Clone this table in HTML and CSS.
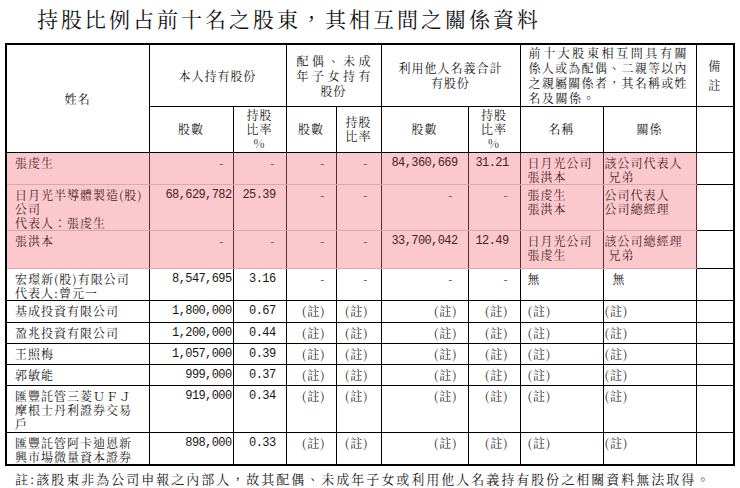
FILE: index.html
```html
<!DOCTYPE html>
<html lang="zh-Hant">
<head>
<meta charset="utf-8">
<title>持股比例占前十名之股東</title>
<link rel="stylesheet" href="styles.css">
</head>
<body>
<div class="page">
  <h1 class="title">持股比例占前十名之股東，其相互間之關係資料</h1>
  <table class="grid">
    <colgroup>
      <col class="w-name"><col class="w-n1"><col class="w-p1"><col class="w-n2"><col class="w-p2"><col class="w-n3"><col class="w-p3"><col class="w-rn"><col class="w-rl"><col class="w-bz">
    </colgroup>
    <thead>
      <tr class="hr1">
        <th rowspan="2">姓名</th>
        <th colspan="2">本人持有股份</th>
        <th colspan="2"><div class="jbox w72"><span class="jl">配偶、未成</span><span class="jl">年子女持有</span></div><span class="cl">股份</span></th>
        <th colspan="2">利用他人名義合計<br>有股份</th>
        <th colspan="2" class="lead"><span class="jl">前十大股東相互間具有關</span><span class="jl">係人或為配偶、二親等以內</span><span class="jl">之親屬關係者，其名稱或姓</span><span class="last">名及關係。</span></th>
        <th class="bz-h">備<br>註</th>
      </tr>
      <tr class="hr2">
        <th>股數</th>
        <th>持股<br>比率<br>%</th>
        <th>股數</th>
        <th>持股<br>比率</th>
        <th>股數</th>
        <th>持股<br>比率<br>%</th>
        <th>名稱</th>
        <th>關係</th>
        <th></th>
      </tr>
    </thead>
    <tbody>
      <tr class="hl hl-first r31">
        <td class="nm">張虔生</td>
        <td class="n1 dash">-</td>
        <td class="p1">-</td>
        <td class="n2">-</td>
        <td class="p2">-</td>
        <td class="n3 num">84,360,669</td>
        <td class="p3 num">31.21</td>
        <td class="rn">日月光公司<br>張洪本</td>
        <td class="rl">該公司代表人<br>&nbsp;兄弟</td>
        <td class="bz"></td>
      </tr>
      <tr class="hl r46">
        <td class="nm">日月光半導體製造(股)<br>公司<br>代表人：張虔生</td>
        <td class="n1 num">68,629,782</td>
        <td class="p1 num">25.39</td>
        <td class="n2">-</td>
        <td class="p2">-</td>
        <td class="n3 dash3">-</td>
        <td class="p3">-</td>
        <td class="rn">張虔生<br>張洪本</td>
        <td class="rl">公司代表人<br>公司總經理</td>
        <td class="bz"></td>
      </tr>
      <tr class="hl r38">
        <td class="nm">張洪本</td>
        <td class="n1 dash">-</td>
        <td class="p1">-</td>
        <td class="n2">-</td>
        <td class="p2">-</td>
        <td class="n3 num">33,700,042</td>
        <td class="p3 num">12.49</td>
        <td class="rn">日月光公司<br>張虔生</td>
        <td class="rl">該公司總經理<br>&nbsp;兄弟</td>
        <td class="bz"></td>
      </tr>
      <tr class="r32">
        <td class="nm">宏璟新(股)有限公司<br>代表人:曾元一</td>
        <td class="n1 num">8,547,695</td>
        <td class="p1 num">3.16</td>
        <td class="n2">-</td>
        <td class="p2">-</td>
        <td class="n3 dash3">-</td>
        <td class="p3">-</td>
        <td class="rn">無</td>
        <td class="rl wu">無</td>
        <td class="bz"></td>
      </tr>
      <tr class="r22">
        <td class="nm">基成投資有限公司</td>
        <td class="n1 num">1,800,000</td>
        <td class="p1 num">0.67</td>
        <td class="n2">(註)</td>
        <td class="p2">(註)</td>
        <td class="n3">(註)</td>
        <td class="p3">(註)</td>
        <td class="rn">(註)</td>
        <td class="rl">(註)</td>
        <td class="bz"></td>
      </tr>
      <tr class="r21">
        <td class="nm">盈兆投資有限公司</td>
        <td class="n1 num">1,200,000</td>
        <td class="p1 num">0.44</td>
        <td class="n2">(註)</td>
        <td class="p2">(註)</td>
        <td class="n3">(註)</td>
        <td class="p3">(註)</td>
        <td class="rn">(註)</td>
        <td class="rl">(註)</td>
        <td class="bz"></td>
      </tr>
      <tr class="r21">
        <td class="nm">王照梅</td>
        <td class="n1 num">1,057,000</td>
        <td class="p1 num">0.39</td>
        <td class="n2">(註)</td>
        <td class="p2">(註)</td>
        <td class="n3">(註)</td>
        <td class="p3">(註)</td>
        <td class="rn">(註)</td>
        <td class="rl">(註)</td>
        <td class="bz"></td>
      </tr>
      <tr class="r21">
        <td class="nm">郭敏能</td>
        <td class="n1 num">999,000</td>
        <td class="p1 num">0.37</td>
        <td class="n2">(註)</td>
        <td class="p2">(註)</td>
        <td class="n3">(註)</td>
        <td class="p3">(註)</td>
        <td class="rn">(註)</td>
        <td class="rl">(註)</td>
        <td class="bz"></td>
      </tr>
      <tr class="r47">
        <td class="nm">匯豐託管三菱ＵＦＪ<br>摩根士丹利證券交易<br>戶</td>
        <td class="n1 num">919,000</td>
        <td class="p1 num">0.34</td>
        <td class="n2">(註)</td>
        <td class="p2">(註)</td>
        <td class="n3">(註)</td>
        <td class="p3">(註)</td>
        <td class="rn">(註)</td>
        <td class="rl">(註)</td>
        <td class="bz"></td>
      </tr>
      <tr class="r32">
        <td class="nm">匯豐託管阿卡迪恩新<br>興市場微量資本證券</td>
        <td class="n1 num">898,000</td>
        <td class="p1 num">0.33</td>
        <td class="n2">(註)</td>
        <td class="p2">(註)</td>
        <td class="n3">(註)</td>
        <td class="p3">(註)</td>
        <td class="rn">(註)</td>
        <td class="rl">(註)</td>
        <td class="bz"></td>
      </tr>
    </tbody>
  </table>
  <p class="note">註:該股東非為公司申報之內部人，故其配偶、未成年子女或利用他人名義持有股份之相關資料無法取得。</p>
</div>
</body>
</html>
```

FILE: styles.css
```css
html, body {
  margin: 0;
  padding: 0;
  background: #ffffff;
}

body {
  color: #161616;
  font-family: "Noto Serif CJK TC", "AR PL UMing TW", "Noto Sans CJK TC", serif;
}

.page {
  padding: 5px;
}

.title {
  margin: 0 0 12px 32px;
  font-size: 21px;
  line-height: 26px;
  letter-spacing: 3px;
  font-weight: normal;
  color: #111;
}

.grid {
  border-collapse: collapse;
  table-layout: fixed;
  width: 728px;
  border: 2px solid #000;
}

.w-name { width: 143px; }
.w-n1 { width: 84px; }
.w-p1 { width: 53px; }
.w-n2 { width: 50px; }
.w-p2 { width: 45px; }
.w-n3 { width: 87px; }
.w-p3 { width: 52px; }
.w-rn { width: 83px; }
.w-rl { width: 93px; }
.w-bz { width: 38px; }

.grid th,
.grid td {
  border: 1px solid #000;
  padding: 0;
  font-size: 12px;
  letter-spacing: 1px;
  line-height: 14px;
  font-weight: normal;
  overflow: hidden;
  white-space: nowrap;
}

.grid th {
  text-align: center;
  vertical-align: middle;
  line-height: 15px;
}

.hr1 { height: 62px; }
.hr2 { height: 46px; }
.hr2 th { line-height: 14px; }

.jbox {
  display: inline-block;
  text-align: left;
}
.w72 { width: 74px; }

.jl {
  display: block;
  text-align: justify;
  text-align-last: justify;
  letter-spacing: 0;
}
.cl {
  display: block;
}

.grid th.lead {
  text-align: left;
  padding: 0 9px 0 8px;
}
.lead .last {
  display: block;
  letter-spacing: 1.5px;
}

.bz-h {
  line-height: 19px !important;
}

.grid td {
  vertical-align: top;
  padding-top: 3px;
}

.r31 { height: 31px; }
.r46 { height: 46px; }
.r38 { height: 38px; }
.r32 { height: 32px; }
.r22 { height: 22px; }
.r21 { height: 21px; }
.r47 { height: 47px; }

.grid td.nm { padding-left: 8px; text-align: left; }
.grid td.n1 { text-align: right; padding-right: 1px; }
.grid td.n1.dash { padding-right: 8px; }
.grid td.p1 { text-align: right; padding-right: 10px; }
.grid td.n2 { text-align: right; padding-right: 10px; }
.grid td.p2 { text-align: right; padding-right: 12px; }
.grid td.n3 { text-align: right; padding-right: 10px; }
.grid td.n3.dash3 { padding-right: 14px; }
.grid td.p3 { text-align: right; padding-right: 11px; }
.grid td.rn { text-align: left; padding-left: 7px; }
.grid td.rl { text-align: left; padding-left: 1px; }
.grid td.rl.wu { padding-left: 9px; }

.grid td.num {
  font-family: "Liberation Mono", monospace;
  font-size: 12px;
  letter-spacing: -0.6px;
}

/* highlighted rows */
.hl td {
  background: #fbc9cd;
  color: #452224;
  border-left-color: #5c2b2e;
  border-right-color: #5c2b2e;
  border-top-color: #d6a7ab;
  border-bottom-color: #d6a7ab;
}
.hl td.bz {
  background: #ffffff;
  border-top-color: #000;
  border-bottom-color: #000;
  border-right-color: #000;
}
.hl td.nm {
  border-left-color: #000;
}
.hl-first td {
  border-top-color: #000;
}
.r32 td {
  border-top-color: #000;
}

.note {
  margin: 5px 0 0 10px;
  font-size: 13px;
  line-height: 16px;
  letter-spacing: 2px;
  white-space: nowrap;
}
```
